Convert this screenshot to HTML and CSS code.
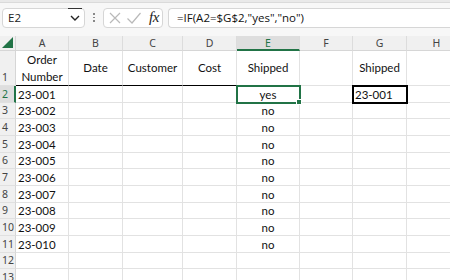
FILE: index.html
```html
<!doctype html>
<html>
  <head>
    <meta charset="UTF-8" />
    <title>Book1 - Excel</title>
    <link rel="stylesheet" href="styles.css">
  </head>
  <body>
    <div class="ribbon-edge"></div>

    <div class="formula-bar">
      <div class="name-box">
        <span>E2</span>
        <svg class="chevron" width="10" height="6" viewBox="0 0 10 6">
          <path d="M1 1l4 4 4-4" fill="none" stroke="#222" stroke-width="1.4" />
        </svg>
      </div>
      <div class="grip"><i></i><i></i><i></i></div>
      <div class="fx-buttons">
        <svg width="14" height="14" viewBox="0 0 14 14">
          <path d="M2 2l10 10M12 2L2 12" stroke="#b9b9b9" stroke-width="1.2" />
        </svg>
        <svg width="16" height="14" viewBox="0 0 16 14">
          <path d="M1.5 7.5l4.5 4.5 8.5-10" fill="none" stroke="#b9b9b9" stroke-width="1.2" />
        </svg>
        <span class="fx">fx</span>
      </div>
      <div class="formula-input">=IF(A2=$G$2,"yes","no")</div>
    </div>

    <div class="sheet">
      <div class="corner"><svg width="11" height="11" viewBox="0 0 11 11"><path d="M11 0V11H0z" fill="#217346" /></svg></div>
      <div class="col-head">A</div>
      <div class="col-head">B</div>
      <div class="col-head">C</div>
      <div class="col-head">D</div>
      <div class="col-head active">E</div>
      <div class="col-head">F</div>
      <div class="col-head">G</div>
      <div class="col-head">H</div>

      <div class="row-head tall">1</div>
      <div class="cell center title underline">Order<br>Number</div>
      <div class="cell center title underline">Date</div>
      <div class="cell center title underline">Customer</div>
      <div class="cell center title underline">Cost</div>
      <div class="cell center title underline">Shipped</div>
      <div class="cell"></div>
      <div class="cell center title">Shipped</div>
      <div class="cell"></div>

      <div class="row-head active">2</div>
      <div class="cell">23-001</div>
      <div class="cell"></div>
      <div class="cell"></div>
      <div class="cell"></div>
      <div class="cell center selected">yes</div>
      <div class="cell"></div>
      <div class="cell boxed">23-001</div>
      <div class="cell"></div>

      <div class="row-head">3</div>
      <div class="cell">23-002</div><div class="cell"></div><div class="cell"></div><div class="cell"></div>
      <div class="cell center">no</div><div class="cell"></div><div class="cell"></div><div class="cell"></div>

      <div class="row-head">4</div>
      <div class="cell">23-003</div><div class="cell"></div><div class="cell"></div><div class="cell"></div>
      <div class="cell center">no</div><div class="cell"></div><div class="cell"></div><div class="cell"></div>

      <div class="row-head">5</div>
      <div class="cell">23-004</div><div class="cell"></div><div class="cell"></div><div class="cell"></div>
      <div class="cell center">no</div><div class="cell"></div><div class="cell"></div><div class="cell"></div>

      <div class="row-head">6</div>
      <div class="cell">23-005</div><div class="cell"></div><div class="cell"></div><div class="cell"></div>
      <div class="cell center">no</div><div class="cell"></div><div class="cell"></div><div class="cell"></div>

      <div class="row-head">7</div>
      <div class="cell">23-006</div><div class="cell"></div><div class="cell"></div><div class="cell"></div>
      <div class="cell center">no</div><div class="cell"></div><div class="cell"></div><div class="cell"></div>

      <div class="row-head">8</div>
      <div class="cell">23-007</div><div class="cell"></div><div class="cell"></div><div class="cell"></div>
      <div class="cell center">no</div><div class="cell"></div><div class="cell"></div><div class="cell"></div>

      <div class="row-head">9</div>
      <div class="cell">23-008</div><div class="cell"></div><div class="cell"></div><div class="cell"></div>
      <div class="cell center">no</div><div class="cell"></div><div class="cell"></div><div class="cell"></div>

      <div class="row-head">10</div>
      <div class="cell">23-009</div><div class="cell"></div><div class="cell"></div><div class="cell"></div>
      <div class="cell center">no</div><div class="cell"></div><div class="cell"></div><div class="cell"></div>

      <div class="row-head">11</div>
      <div class="cell">23-010</div><div class="cell"></div><div class="cell"></div><div class="cell"></div>
      <div class="cell center">no</div><div class="cell"></div><div class="cell"></div><div class="cell"></div>

      <div class="row-head">12</div>
      <div class="cell"></div><div class="cell"></div><div class="cell"></div><div class="cell"></div>
      <div class="cell"></div><div class="cell"></div><div class="cell"></div><div class="cell"></div>

      <div class="row-head">13</div>
      <div class="cell"></div><div class="cell"></div><div class="cell"></div><div class="cell"></div>
      <div class="cell"></div><div class="cell"></div><div class="cell"></div><div class="cell"></div>
    </div>
  </body>
</html>
```

FILE: styles.css
```css
html,
body {
  margin: 0;
  background-color: #fff;
}
body {
  width: 450px;
  height: 280px;
  overflow: hidden;
  font-family: "Open Sans", "Noto Sans", sans-serif;
}
.ribbon-edge {
  height: 2px;
  background-color: #e9e9e9;
  border-bottom: 1px solid #dadada;
}
.formula-bar {
  display: flex;
  align-items: center;
  height: 33px;
  background-color: #f7f7f7;
  padding-left: 2px;
  box-sizing: border-box;
  padding-bottom: 4px;
}
.name-box,
.fx-buttons,
.formula-input {
  height: 20px;
  box-sizing: border-box;
  background-color: #fff;
  border: 1px solid #d6d6d6;
  border-radius: 4px;
  display: flex;
  align-items: center;
}
.name-box {
  position: relative;
  width: 83px;
  padding-left: 5px;
  font-size: 11.5px;
  color: #222;
}
.name-box span {
  flex: 1;
}
.name-box .chevron {
  margin-right: 4px;
}
.name-box::before {
  content: "";
  position: absolute;
  top: -1px;
  right: 2px;
  width: 14px;
  height: 1px;
  background-color: #333;
}
.grip {
  width: 18px;
  display: flex;
  flex-direction: column;
  align-items: center;
  gap: 2px;
}
.grip i {
  width: 1.5px;
  height: 1.5px;
  background-color: #888;
}
.fx-buttons {
  width: 60px;
  padding-left: 4px;
  gap: 4px;
}
.fx {
  font-family: "Liberation Serif", serif;
  font-style: italic;
  font-size: 15px;
  color: #222;
  margin-left: 3px;
  letter-spacing: -0.5px;
}
.formula-input {
  margin-left: 5px;
  flex: 1;
  border-right: none;
  border-radius: 4px 0 0 4px;
  padding-left: 8px;
  font-size: 11.5px;
  color: #111;
  white-space: nowrap;
}

.sheet {
  display: grid;
  grid-template-columns: 16px 53px 54px 60px 54px 63px 53px 54px 60px;
  grid-template-rows: 15px 35px repeat(12, 16.67px);
}
.corner,
.col-head,
.row-head {
  background-color: #f0f0f0;
  color: #444;
  font-family: "Noto Sans", sans-serif;
  font-size: 10.5px;
  display: flex;
  align-items: center;
  justify-content: center;
  box-sizing: border-box;
}
.corner {
  border-right: 1px solid #d6d6d6;
  border-bottom: 1px solid #d6d6d6;
  align-items: flex-end;
  justify-content: flex-end;
  padding: 0 2px 2px 0;
}
.col-head {
  border-right: 1px solid #dcdcdc;
  border-bottom: 1px solid #d6d6d6;
}
.col-head.active {
  background-color: #dedede;
  color: #217346;
  border-bottom: 2px solid #217346;
}
.row-head {
  border-right: 1px solid #d6d6d6;
  border-bottom: 1px solid #e0e0e0;
  justify-content: flex-start;
  padding-left: 2px;
}
.row-head.tall {
  align-items: flex-end;
  padding-bottom: 1px;
}
.row-head.active {
  color: #217346;
  border-right: 2px solid #217346;
  background-color: #dedede;
}
.cell {
  box-sizing: border-box;
  border-right: 1px solid #e2e2e2;
  border-bottom: 1px solid #e2e2e2;
  font-family: "Lato", sans-serif;
  font-size: 11.5px;
  color: #111;
  padding-left: 2px;
  display: flex;
  align-items: flex-end;
  padding-bottom: 1px;
  white-space: nowrap;
  position: relative;
}
.cell.center {
  justify-content: center;
  text-align: center;
  padding-left: 0;
}
.cell.title {
  align-items: center;
  line-height: 17px;
}
.cell.underline {
  border-bottom-color: #000;
}
.cell.selected {
  outline: 2px solid #217346;
  outline-offset: -1px;
  z-index: 1;
}
.cell.selected::after {
  content: "";
  position: absolute;
  right: -3px;
  bottom: -3px;
  width: 4px;
  height: 4px;
  background-color: #217346;
  border: 1px solid #fff;
}
.cell.boxed {
  outline: 2px solid #000;
  outline-offset: -1px;
  z-index: 1;
}
```
